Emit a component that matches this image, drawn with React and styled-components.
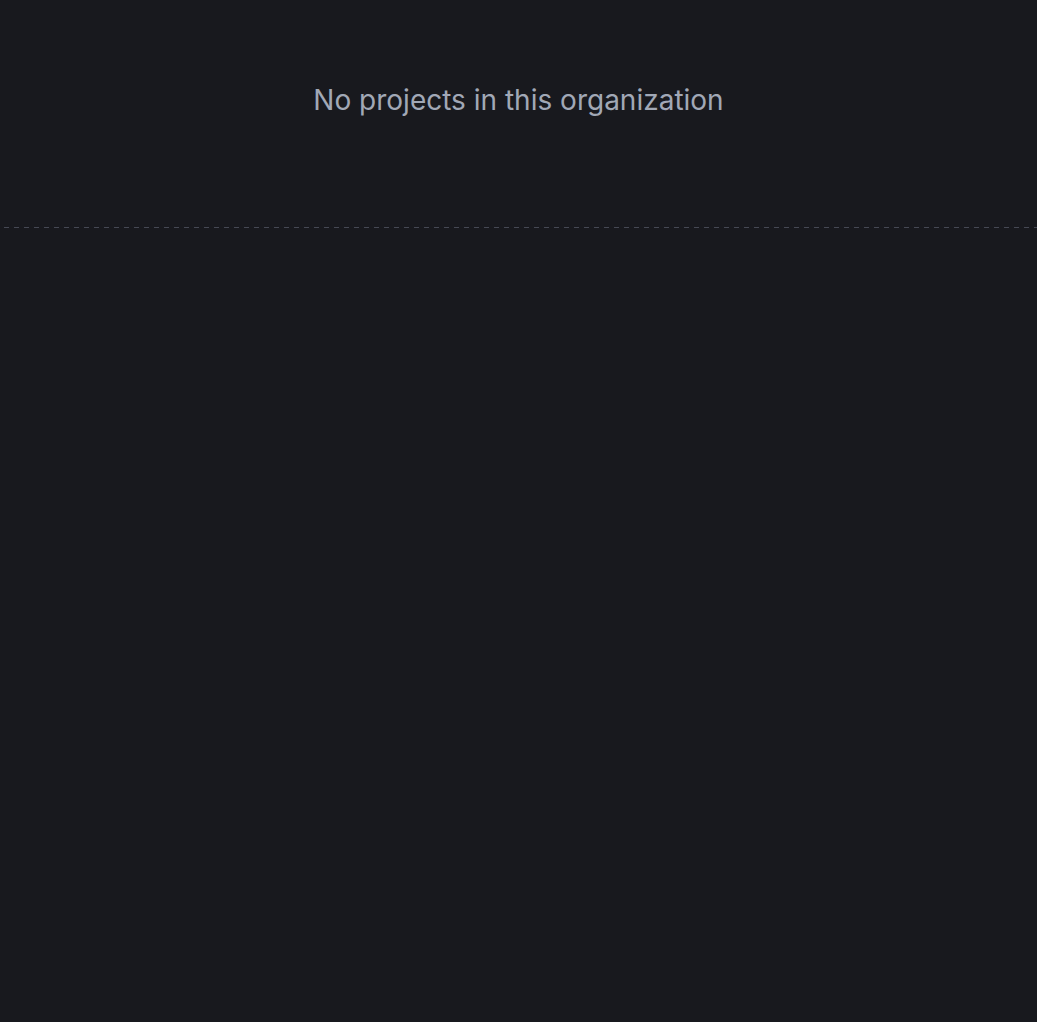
import React from 'react';
import styled, { createGlobalStyle } from 'styled-components';

const GlobalStyle = createGlobalStyle`
  html, body {
    margin: 0;
    padding: 0;
    background: #18191e;
  }
  body {
    font-family: Inter, "Noto Sans", sans-serif;
    -webkit-font-smoothing: antialiased;
  }
`;

const Page = styled.main`
  min-height: 1022px;
  background: #18191e;
  display: flex;
  flex-direction: column;
`;

const EmptyState = styled.section`
  height: 227px;
  display: flex;
  justify-content: center;
  padding-top: 82px;
  box-sizing: border-box;
`;

const EmptyText = styled.p`
  margin: 0;
  font-size: 28px;
  line-height: 36px;
  font-weight: 400;
  color: #a1a8b6;
`;

const Divider = styled.div`
  height: 1px;
  margin-left: 4px;
  background-image: repeating-linear-gradient(
    to right,
    #454853 0,
    #454853 5px,
    transparent 5px,
    transparent 10px
  );
`;

export default function App() {
  return (
    <>
      <GlobalStyle />
      <Page>
        <EmptyState>
          <EmptyText>No projects in this organization</EmptyText>
        </EmptyState>
        <Divider />
      </Page>
    </>
  );
}
